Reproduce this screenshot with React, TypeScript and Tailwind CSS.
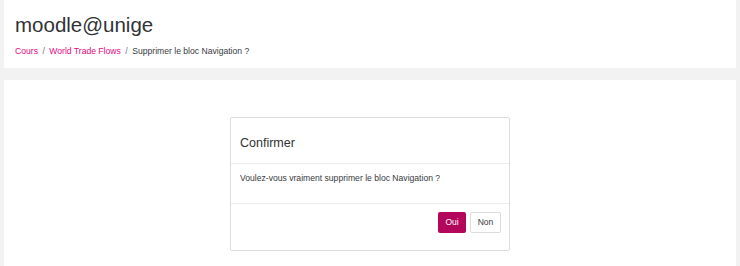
export default function App() {
  return (
    <div className="h-[266px] overflow-hidden bg-[#f2f2f2] px-1 font-['Liberation_Sans',Arial,sans-serif] text-[#373a3c]">
      {/* page header */}
      <header className="h-[68px] bg-white pl-[11px] pt-[15px]">
        <h1 className="text-[20.5px] leading-none text-[#303335]">moodle@unige</h1>
        <nav className="mt-[11px] flex items-center text-[8.6px] leading-none">
          <a className="text-[#e5097f]">Cours</a>
          <span className="px-[4.5px] text-[#6a737b]">/</span>
          <a className="text-[#e5097f]">World Trade Flows</a>
          <span className="px-[4.5px] text-[#6a737b]">/</span>
          <span className="text-[#373a3c]">Supprimer le bloc Navigation ?</span>
        </nav>
      </header>

      {/* main content */}
      <main className="mt-3 h-[186px] bg-white pt-[37px]">
        <div className="mx-auto w-[280px] rounded-[2px] border border-[#dcdcdc] bg-white">
          <div className="h-[46px] border-b border-[#ececec] pl-[9px] pt-[19px]">
            <h5 className="text-[12.5px] leading-none text-[#303335]">Confirmer</h5>
          </div>
          <div className="h-[40px] border-b border-[#ececec] pl-[9px] pt-[10px]">
            <p className="text-[8.6px] leading-none">Voulez-vous vraiment supprimer le bloc Navigation ?</p>
          </div>
          <div className="flex h-[46px] justify-end gap-[4px] pr-[8px] pt-[8px]">
            <button className="h-[21px] w-[28px] rounded-[2px] bg-[#b3075c] text-[8.5px] leading-none text-white">
              Oui
            </button>
            <button className="h-[21px] w-[31px] rounded-[2px] border border-[#dcdcdc] bg-white text-[8.5px] leading-none text-[#373a3c]">
              Non
            </button>
          </div>
        </div>
      </main>
    </div>
  );
}
